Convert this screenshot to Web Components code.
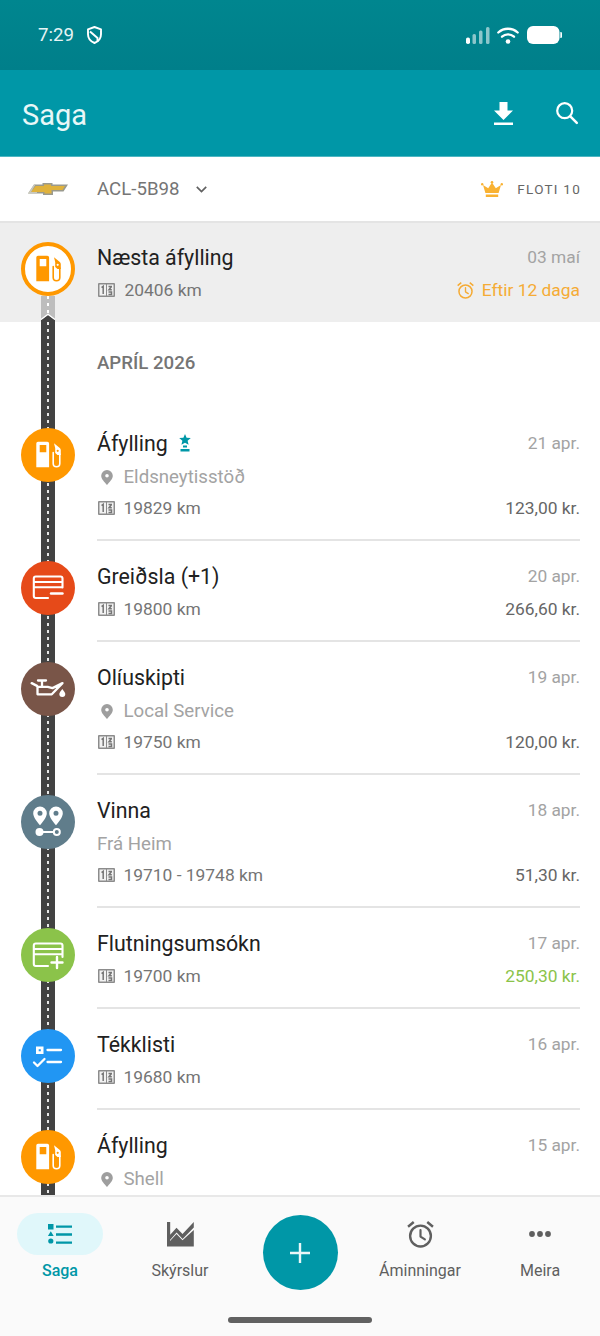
<!DOCTYPE html>
<html lang="is">
<head>
<meta charset="utf-8">
<title>Saga</title>
<style>
  html, body { margin: 0; height: 100%; }
  body { font-family: Roboto, "Noto Sans", sans-serif; }
</style>
</head>
<body>
<app-shell>
  <status-bar slot="top" time="7:29"></status-bar>
  <tool-bar slot="top" heading="Saga"></tool-bar>
  <vehicle-bar slot="top" plate="ACL-5B98" plan="FLOTI 10"></vehicle-bar>

  <next-item date="03 maí" odo="20406 km" due="Eftir 12 daga">Næsta áfylling</next-item>
  <history-list heading="APRÍL 2026">
    <history-item icon="fuel" color="#ff9800" date="21 apr." starred>
      Áfylling
      <info-row slot="rows" icon="pin" muted>Eldsneytisstöð</info-row>
      <info-row slot="rows" icon="odo">19829 km<span slot="end">123,00 kr.</span></info-row>
    </history-item>
    <history-item icon="cardMinus" color="#e64a19" date="20 apr.">
      Greiðsla (+1)
      <info-row slot="rows" icon="odo">19800 km<span slot="end">266,60 kr.</span></info-row>
    </history-item>
    <history-item icon="oil" color="#795548" date="19 apr.">
      Olíuskipti
      <info-row slot="rows" icon="pin" muted>Local Service</info-row>
      <info-row slot="rows" icon="odo">19750 km<span slot="end">120,00 kr.</span></info-row>
    </history-item>
    <history-item icon="trip" color="#607d8b" date="18 apr.">
      Vinna
      <info-row slot="rows" muted>Frá Heim</info-row>
      <info-row slot="rows" icon="odo">19710 - 19748 km<span slot="end">51,30 kr.</span></info-row>
    </history-item>
    <history-item icon="cardPlus" color="#8bc34a" date="17 apr.">
      Flutningsumsókn
      <info-row slot="rows" icon="odo">19700 km<span slot="end" style="color:#8bc34a">250,30 kr.</span></info-row>
    </history-item>
    <history-item icon="checklist" color="#2196f3" date="16 apr.">
      Tékklisti
      <info-row slot="rows" icon="odo">19680 km</info-row>
    </history-item>
    <history-item icon="fuel" color="#ff9800" date="15 apr.">
      Áfylling
      <info-row slot="rows" icon="pin" muted>Shell</info-row>
    </history-item>
  </history-list>

  <bottom-nav slot="bottom"></bottom-nav>
</app-shell>

<script>
// every icon is [viewBox, inner svg]; currentColor carries the tint
const FUEL = `
  <path fill-rule="evenodd" d="M17 13.700h9.300a1.800 1.800 0 0 1 1.800 1.800v23.800H15.300V15.500a1.800 1.800 0 0 1 1.700-1.800zm1.700 3.400v7.200h6.600v-7.200z"/>
  <path fill-rule="evenodd" d="M33 15.300l5.800 4.700c.7.600 1 1.300 1 2.200v4.800h-3.300l-2.300-2V20zm3.700 6.400a1.100 1.100 0 1 0 0 2.200 1.100 1.100 0 0 0 0-2.200z"/>
  <path fill="none" stroke="currentColor" stroke-width="1.600" stroke-linecap="round" d="M38.800 26v9.400a3.300 3.300 0 0 1-6.600 0V24.500"/>`

const ICONS = {
  fuel: ['0 0 54 54', FUEL],
  cardMinus: ['0 0 54 54', `
    <g fill="none" stroke="currentColor" stroke-width="2.100" stroke-linecap="round" stroke-linejoin="round">
      <path d="M27 37H14.800a2 2 0 0 1-2-2V17.500a2 2 0 0 1 2-2h24.700a2 2 0 0 1 2 2v9"/>
      <path d="M13.500 21h27.500M13.500 26.300h27.500"/>
      <path stroke-width="2.400" d="M30 32.500h11.500"/>
    </g>`],
  cardPlus: ['0 0 54 54', `
    <g fill="none" stroke="currentColor" stroke-width="2.100" stroke-linecap="round" stroke-linejoin="round">
      <path d="M27 38H14.800a2 2 0 0 1-2-2V17.500a2 2 0 0 1 2-2h24.700a2 2 0 0 1 2 2V29"/>
      <path d="M13.500 21h27.500M13.500 26.300h27.500"/>
      <path stroke-width="2.400" d="M30.500 34.500h11M36 29v11"/>
    </g>`],
  oil: ['0 0 54 54', `
    <g fill="none" stroke="currentColor" stroke-width="2.300" stroke-linecap="round" stroke-linejoin="round">
      <path d="M16.500 24.800v7.500h14.300l10.700-11.200-10 5-4.800-1.300z"/>
      <path d="M21 18.800v6M17 18.500h8"/>
    </g>
    <path stroke="currentColor" stroke-width="2.500" stroke-linecap="round" d="M10.700 21.200l5.300 2.600"/>
    <path d="M41.300 27c1.500 2.100 3 3.500 3 5a3 3 0 0 1-6 0c0-1.500 1.500-2.900 3-5z"/>`],
  trip: ['0 0 54 54', `
    <path fill-rule="evenodd" d="M19 11.500a6.800 6.800 0 0 1 6.800 6.800c0 4-4 8.500-6.800 12-2.800-3.500-6.800-8-6.800-12a6.800 6.800 0 0 1 6.800-6.800zm0 4.300a2.500 2.500 0 1 0 0 5 2.500 2.500 0 0 0 0-5z"/>
    <path fill-rule="evenodd" d="M35 11.500a6.800 6.800 0 0 1 6.800 6.800c0 4-4 8.500-6.800 12-2.800-3.500-6.800-8-6.800-12a6.800 6.800 0 0 1 6.800-6.800zm0 4.300a2.500 2.500 0 1 0 0 5 2.500 2.500 0 0 0 0-5z"/>
    <circle cx="18.500" cy="37" r="4"/>
    <path fill="none" stroke="currentColor" stroke-width="2" d="M21 37h11"/>
    <circle cx="35.800" cy="37" r="3" fill="none" stroke="currentColor" stroke-width="2"/>`],
  checklist: ['0 0 54 54', `
    <path fill-rule="evenodd" d="M15 17.500h7.500V25H15zm2.700 2.700v2.100h2.100v-2.100z"/>
    <path fill="none" stroke="currentColor" stroke-width="2.300" stroke-linecap="round" d="M26.500 21H40M26.500 33H40"/>
    <path fill="none" stroke="currentColor" stroke-width="2.300" stroke-linecap="round" stroke-linejoin="round" d="M13 33.500l3.500 3.500 7-7"/>`],
  odo: ['0 0 17 14', `
    <path fill="#8c8c8c" d="M1 0h15a1 1 0 0 1 1 1v12a1 1 0 0 1-1 1H1a1 1 0 0 1-1-1V1a1 1 0 0 1 1-1z"/>
    <path fill="#f2f2f2" d="M1.500 1.500h6.500v11H1.500zM9 1.500h6.500v11H9z"/>
    <path fill="none" stroke="#757575" stroke-width="1.500" d="M3.500 4.500 5.200 3.300V11M10.500 3.500h3.500M13.500 3.500 11 6.800h2.800M10.500 9h3v2.500h-3"/>`],
  pin: ['0 0 12 15', `
    <path fill-rule="evenodd" d="M6 0a5.800 5.800 0 0 1 5.800 5.800C11.800 9 8.300 12.400 6 15 3.700 12.400.2 9 .2 5.800A5.800 5.800 0 0 1 6 0zm0 4a1.800 1.800 0 1 0 0 3.600A1.800 1.800 0 0 0 6 4z"/>`],
  alarm: ['0 0 26 26', `
    <circle cx="13" cy="14.500" r="10" fill="none" stroke="currentColor" stroke-width="2.300"/>
    <path fill="none" stroke="currentColor" stroke-width="2.100" stroke-linecap="round" stroke-linejoin="round" d="M13 8.800V15l4.200 2.700"/>
    <path fill="none" stroke="currentColor" stroke-width="2.400" d="M1 5.500 6.500 1M25 5.500 19.500 1"/>`],
  download: ['0 0 19 23', `<path d="M5.500 0h8v8.500H19L9.500 18 0 8.500h5.500zM0 20.500h19V23H0z"/>`],
  search: ['0 0 22 22', `
    <circle cx="8.700" cy="8.700" r="7.500" fill="none" stroke="currentColor" stroke-width="2.200"/>
    <path stroke="currentColor" stroke-width="2.500" stroke-linecap="round" d="M14.300 14.300 20.800 20.800"/>`],
  chevron: ['0 0 11 7', `<path fill="none" stroke="currentColor" stroke-width="1.700" d="M.8.8 5.500 5.500 10.200.8"/>`],
  crown: ['0 0 22 16', `
    <path d="M11 1.500l3.800 5.700L20 4l-2.400 8H4.400L2 4l5.200 3.200z"/>
    <circle cx="11" cy="1.300" r="1.300"/><circle cx="1.200" cy="3.300" r="1.200"/><circle cx="20.800" cy="3.300" r="1.200"/>
    <path d="M4.800 13.500h12.400V16H4.800z"/>`],
  star: ['0 0 12 18', `
    <path d="M6 0l1.600 3.800 4.200.3-3.200 2.700 1 4L6 8.700 2.400 10.800l1-4L.2 4.100l4.200-.3z"/>
    <path d="M4 11.500h4v2H4zM1.500 15h9v2.500h-9z"/>`],
  list: ['0 0 24 20', `
    <path d="M0 0h5.500v5.500H0zM2.800 7.200l2.900 4.800H-.1z"/>
    <circle cx="2.800" cy="17" r="2.600"/>
    <path stroke="currentColor" stroke-width="2.300" d="M8 2.700h16M8 10.500h16M8 18.700h16"/>`],
  chart: ['0 0 27 25', `
    <path d="M0 0h3.200v12.800L9.500 5.800l6 6.200L26.800 0v5.500L15.600 17l-6-6.500L3 18v1L9.500 12l6 6.300L26.800 8v16.500H0z"/>`],
  more: ['0 0 22 6', `<circle cx="3" cy="3" r="2.900"/><circle cx="11" cy="3" r="2.900"/><circle cx="19" cy="3" r="2.900"/>`],
  shield: ['0 0 15 18', `
    <path fill="none" stroke="currentColor" stroke-width="1.900" stroke-linejoin="round" d="M7.500 1 14 3.300v5c0 4-2.700 7.200-6.500 8.700C3.700 15.500 1 12.300 1 8.300v-5z"/>
    <path fill="none" stroke="currentColor" stroke-width="1.900" d="M3 5.500 10.500 12v4"/>`],
  signal: ['0 0 24 17', `
    <rect x="0" y="10.500" width="4" height="6.500" rx="1.800"/>
    <rect x="6.500" y="7" width="3.500" height="10" rx="1.500" opacity=".55"/>
    <rect x="13" y="3.500" width="3.500" height="13.500" rx="1.500" opacity=".55"/>
    <rect x="20" y="0" width="3.500" height="17" rx="1.500" opacity=".55"/>`],
  wifi: ['0 0 22 17', `
    <g fill="none" stroke="currentColor" stroke-width="2.300" stroke-linecap="round">
      <path d="M1.300 5.500c5.500-5 13.900-5 19.400 0"/>
      <path d="M5 9.700c3.400-3 8.600-3 12 0"/>
    </g>
    <circle cx="11" cy="14.500" r="2.300"/>`],
  battery: ['0 0 35 18', `
    <rect x="0" y="0" width="32.500" height="18" rx="6"/>
    <path d="M33.300 6h.4a1.300 1.300 0 0 1 1.300 1.300v3.400a1.300 1.300 0 0 1-1.300 1.300h-.4z"/>`]
}

customElements.define('ui-icon', class extends HTMLElement {
  constructor () {
    super()
    const [box, body] = ICONS[this.getAttribute('name')]
    const [, , w, h] = box.split(' ').map(Number)
    const width = Number(this.getAttribute('width')) || w
    const height = width * h / w
    this.attachShadow({ mode: 'open' }).innerHTML = `
      <style>
        :host { display: block; flex: none; width: ${width}px; height: ${height}px; line-height: 0; }
        svg { display: block; overflow: visible; fill: currentColor; }
      </style>
      <svg width="${width}" height="${height}" viewBox="${box}">${body}</svg>`
  }
})

customElements.define('app-shell', class extends HTMLElement {
  constructor () {
    super()
    this.attachShadow({ mode: 'open' }).innerHTML = `
      <style>
        :host { display: flex; flex-direction: column; width: 600px; height: 1336px; overflow: hidden; background: #fff; }
        main { flex: 1; min-height: 0; overflow: hidden; }
      </style>
      <slot name="top"></slot>
      <main><slot></slot></main>
      <slot name="bottom"></slot>`
  }
})

customElements.define('status-bar', class extends HTMLElement {
  constructor () {
    super()
    this.attachShadow({ mode: 'open' }).innerHTML = `
      <style>
        :host { display: flex; align-items: center; height: 70px; padding: 0 38px 0 38px; box-sizing: border-box; color: #fff;
          background: linear-gradient(#00868f, #007f8a); font-size: 18.670px; }
        .time { margin-right: 13px; color: #e6f4f5; }
        .fill { flex: 1; }
        .wrap { display: flex; align-items: center; }
        .wifi { margin: 0 8px 0 7px; }
      </style>
      <span class="time">${this.getAttribute('time')}</span>
      <ui-icon name="shield" width="15"></ui-icon>
      <span class="fill"></span>
      <span class="wrap">
        <ui-icon name="signal" width="24"></ui-icon>
        <ui-icon class="wifi" name="wifi" width="22"></ui-icon>
        <ui-icon name="battery" width="35"></ui-icon>
      </span>`
  }
})

customElements.define('tool-bar', class extends HTMLElement {
  constructor () {
    super()
    this.attachShadow({ mode: 'open' }).innerHTML = `
      <style>
        :host { display: flex; align-items: center; height: 87px; box-sizing: border-box; padding: 0 22px; color: #fff;
          background: #0097a7; border-bottom: 1px solid #4db6c2; }
        h1 { flex: 1; margin: 4px 0 0; font: 400 29px Roboto, sans-serif; color: #e9f7f8; }
        .dl { margin-right: 43px; }
      </style>
      <h1>${this.getAttribute('heading')}</h1>
      <ui-icon class="dl" name="download" width="19"></ui-icon>
      <ui-icon name="search" width="22"></ui-icon>`
  }
})

customElements.define('vehicle-bar', class extends HTMLElement {
  constructor () {
    super()
    this.attachShadow({ mode: 'open' }).innerHTML = `
      <style>
        :host { display: flex; align-items: center; height: 66px; box-sizing: border-box; padding: 0 20px 0 28px; background: #fff;
          border-bottom: 2px solid #e4e4e4; }
        svg { flex: none; display: block; margin-right: 29px; }
        .plate { font-size: 18.670px; color: #757575; margin-right: 16px; }
        ui-icon[name=chevron] { color: #616161; }
        .fill { flex: 1; }
        ui-icon[name=crown] { color: #f9b233; margin-right: 14px; }
        .plan { font-size: 13.500px; letter-spacing: 1.250px; color: #666; margin-right: -1px; }
      </style>
      <svg width="40" height="12" viewBox="0 0 40 12">
        <path fill="#9a9a8e" d="M6 1.500h8.500V0h10v1.500H40L35.500 8.500H25V12H15V10.500H0z"/>
        <path fill="#e0b23c" d="M7.500 3h8.500V1.500h7V3h14l-2.500 4H23.500v3.500H16.500V9H3z"/>
        <path fill="#c9c9bd" d="M0 10.500 6 1.500H7.500L3 9h6v1.500z"/>
      </svg>
      <span class="plate">${this.getAttribute('plate')}</span>
      <ui-icon name="chevron" width="11"></ui-icon>
      <span class="fill"></span>
      <ui-icon name="crown" width="22"></ui-icon>
      <span class="plan">${this.getAttribute('plan')}</span>`
  }
})

customElements.define('info-row', class extends HTMLElement {
  constructor () {
    super()
    const icon = this.getAttribute('icon')
    const glyph = icon
      ? `<span class="lead"><ui-icon name="${icon}" width="${icon === 'pin' ? 12 : 17}"></ui-icon></span>`
      : ''
    this.attachShadow({ mode: 'open' }).innerHTML = `
      <style>
        :host { display: flex; align-items: center; height: 28px; font-size: 17.400px; color: #757575; }
        :host([muted]) { color: #a3a3a3; font-size: 18.670px; margin: 1px 0 -1px; }
        .lead { display: flex; justify-content: center; width: 19px; margin-right: 7.500px; color: #9e9e9e; }
        .text { flex: 1; }
        ::slotted([slot=end]) { color: #666; }
      </style>
      ${glyph}<span class="text"><slot></slot></span><slot name="end"></slot>`
  }
})

customElements.define('next-item', class extends HTMLElement {
  constructor () {
    super()
    this.attachShadow({ mode: 'open' }).innerHTML = `
      <style>
        :host { display: grid; grid-template-columns: 97px 1fr; height: 99px; padding-right: 20px; position: relative;
          background:
            repeating-linear-gradient(#fff 0 3.500px, transparent 3.500px 7px) 47px 73px / 2px 26px no-repeat,
            linear-gradient(#bdbdbd, #bdbdbd) 41px 73px / 14px 26px no-repeat,
            #eee; }
        .dot { width: 46px; height: 46px; margin: 19px 0 0 21px; border: 4px solid #ff9800; border-radius: 50%;
          background: #fff; color: #ff9800; display: flex; }
        .dot ui-icon { margin: -4px; }
        .tip { position: absolute; left: 41px; bottom: 0; display: block; }
        .line { display: flex; align-items: center; height: 28px; }
        .title { flex: 1; font-size: 21.330px; color: #212121; }
        .date { font-size: 17.330px; color: #a3a3a3; }
        .body { padding-top: 20px; }
        .sub { margin-top: 5px; }
        .lead { display: flex; width: 26.500px; margin-left: 1px; color: #9e9e9e; }
        .odo { flex: 1; font-size: 17.400px; color: #757575; }
        .due { font-size: 17.400px; color: #f5ab35; }
        .alarm { color: #f5ab35; margin-right: 8px; }
      </style>
      <div class="dot"><ui-icon name="fuel" width="54"></ui-icon></div>
      <div class="body">
        <div class="line"><span class="title"><slot></slot></span><span class="date">${this.getAttribute('date')}</span></div>
        <div class="line sub">
          <span class="lead"><ui-icon name="odo" width="17"></ui-icon></span>
          <span class="odo">${this.getAttribute('odo')}</span>
          <ui-icon class="alarm" name="alarm" width="17"></ui-icon>
          <span class="due">${this.getAttribute('due')}</span>
        </div>
      </div>
      <svg class="tip" width="14" height="9" viewBox="0 0 14 9">
        <path fill="#424242" d="M0 9V7l7-5 7 5v2z"/>
        <path fill="none" stroke="#fff" stroke-width="1.300" d="M0 6.500 7 1.300l7 5.200"/>
      </svg>`
  }
})

customElements.define('history-list', class extends HTMLElement {
  constructor () {
    super()
    this.attachShadow({ mode: 'open' }).innerHTML = `
      <style>
        :host { display: block; padding-bottom: 40px;
          background:
            linear-gradient(#e8e8e8 50%, transparent 50%) 47px 0 / 2px 7px repeat-y,
            linear-gradient(#424242, #424242) 41px 0 / 14px 100% no-repeat,
            #fff; }
        h2 { margin: 0 0 0 97px; height: 85px; box-sizing: border-box; padding-top: 28px; font: 500 18.660px/26px Roboto, sans-serif; color: #757575; }
      </style>
      <h2>${this.getAttribute('heading')}</h2>
      <slot></slot>`
  }
})

customElements.define('history-item', class extends HTMLElement {
  constructor () {
    super()
    const star = this.hasAttribute('starred')
      ? '<ui-icon class="star" name="star" width="12"></ui-icon>'
      : ''
    this.attachShadow({ mode: 'open' }).innerHTML = `
      <style>
        :host { display: grid; grid-template-columns: 97px 1fr; }
        .dot { width: 54px; height: 54px; margin: 21px 0 0 21px; border-radius: 50%; color: #fff;
          background: ${this.getAttribute('color')}; }
        .body { margin: 0 20px -1px 0; padding: 22px 0 17px; border-bottom: 2px solid #e4e4e4; }
        .head { display: flex; align-items: center; height: 28px; }
        .title { font-size: 21.330px; color: #212121; }
        .star { color: #0097a7; margin: -1px 0 0 11px; }
        .fill { flex: 1; }
        .date { font-size: 17.330px; color: #a3a3a3; }
        .rows { display: flex; flex-direction: column; gap: 4px; margin-top: 5px; }
      </style>
      <div class="dot"><ui-icon name="${this.getAttribute('icon')}" width="54"></ui-icon></div>
      <div class="body">
        <div class="head">
          <span class="title"><slot></slot></span>${star}
          <span class="fill"></span>
          <span class="date">${this.getAttribute('date')}</span>
        </div>
        <div class="rows"><slot name="rows"></slot></div>
      </div>`
  }
})

customElements.define('nav-tab', class extends HTMLElement {
  constructor () {
    super()
    this.attachShadow({ mode: 'open' }).innerHTML = `
      <style>
        :host { display: flex; flex-direction: column; align-items: center; color: #5f5f5f; font-size: 16px; }
        :host([active]) { color: #0097a7; font-weight: 500; }
        .pill { display: flex; align-items: center; justify-content: center; width: 86px; height: 42px; border-radius: 21px; }
        :host([active]) .pill { background: #e0f7fa; }
        .label { margin-top: 6px; line-height: 20px; }
      </style>
      <span class="pill"><ui-icon name="${this.getAttribute('icon')}" width="${this.getAttribute('size')}"></ui-icon></span>
      <span class="label"><slot></slot></span>`
  }
})

customElements.define('bottom-nav', class extends HTMLElement {
  constructor () {
    super()
    this.attachShadow({ mode: 'open' }).innerHTML = `
      <style>
        :host { display: block; height: 141px; box-sizing: border-box; padding-top: 16px; background: #fafafa;
          border-top: 2px solid #e8e8e8; position: relative; }
        .tabs { display: grid; grid-template-columns: repeat(5, 120px); height: 100px; }
        .fab { justify-self: center; width: 75px; height: 75px; margin-top: 2px; border-radius: 50%; background: #0097a7;
          display: flex; align-items: center; justify-content: center; }
        .home { width: 144px; height: 6px; margin: 4px auto 0; border-radius: 3px; background: #616161; }
      </style>
      <div class="tabs">
        <nav-tab icon="list" size="24" active>Saga</nav-tab>
        <nav-tab icon="chart" size="27">Skýrslur</nav-tab>
        <div class="fab">
          <svg width="20" height="20" viewBox="0 0 20 20"><path stroke="#e9f7f8" stroke-width="2.400" d="M0 10h20M10 0v20"/></svg>
        </div>
        <nav-tab icon="alarm" size="27">Áminningar</nav-tab>
        <nav-tab icon="more" size="22">Meira</nav-tab>
      </div>
      <div class="home"></div>`
  }
})
</script>
</body>
</html>
